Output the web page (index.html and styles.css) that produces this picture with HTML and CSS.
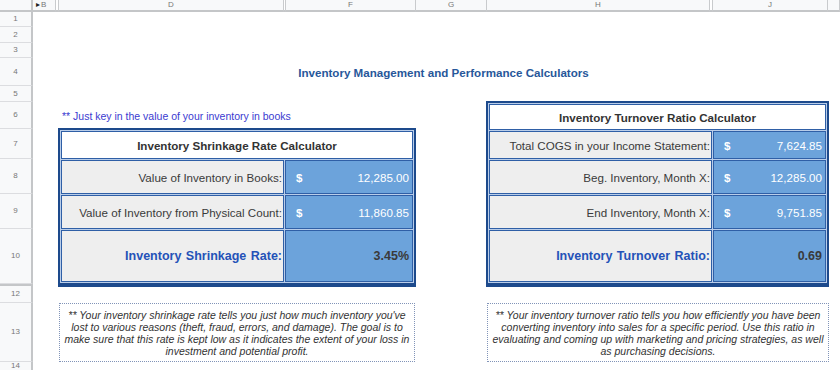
FILE: index.html
```html
<!DOCTYPE html>
<html>
<head>
<meta charset="utf-8">
<title>Inventory Management and Performance Calculators</title>
<link rel="stylesheet" href="styles.css">
</head>
<body>
<div class="sheet">
  <div class="corner"></div>
  <div class="ch ch-b"><span class="tri">&#9656;</span>B</div>
  <div class="ch hid"></div>
  <div class="ch">D</div>
  <div class="ch hid"></div>
  <div class="ch">F</div>
  <div class="ch">G</div>
  <div class="ch">H</div>
  <div class="ch hid"></div>
  <div class="ch">J</div>
  <div class="ch"></div>

  <div class="rh">1</div>
  <div class="rh">2</div>
  <div class="rh">3</div>
  <div class="rh">4</div>
  <div class="rh">5</div>
  <div class="rh">6</div>
  <div class="rh">7</div>
  <div class="rh">8</div>
  <div class="rh">9</div>
  <div class="rh">10</div>
  <div class="rh hid"></div>
  <div class="rh">12</div>
  <div class="rh">13</div>
  <div class="rh">14</div>

  <div class="main-title">Inventory Management and Performance Calculators</div>
  <div class="hint">** Just key in the value of your inventory in books</div>

  <div class="calc calc-left">
    <div class="calc-title">Inventory Shrinkage Rate Calculator</div>
    <div class="lbl">Value of Inventory in Books:</div>
    <div class="val"><span class="cur">$</span><span>12,285.00</span></div>
    <div class="lbl">Value of Inventory from Physical Count:</div>
    <div class="val"><span class="cur">$</span><span>11,860.85</span></div>
    <div class="lbl result">Inventory Shrinkage Rate:</div>
    <div class="val result-val">3.45%</div>
  </div>

  <div class="calc calc-right">
    <div class="calc-title">Inventory Turnover Ratio Calculator</div>
    <div class="lbl">Total COGS in your Income Statement:</div>
    <div class="val"><span class="cur">$</span><span>7,624.85</span></div>
    <div class="lbl">Beg. Inventory, Month X:</div>
    <div class="val"><span class="cur">$</span><span>12,285.00</span></div>
    <div class="lbl">End Inventory, Month X:</div>
    <div class="val"><span class="cur">$</span><span>9,751.85</span></div>
    <div class="lbl result">Inventory Turnover Ratio:</div>
    <div class="val result-val">0.69</div>
  </div>

  <div class="note note-left">** Your inventory shrinkage rate tells you just how much inventory you've lost to various reasons (theft, fraud, errors, and damage). The goal is to make sure that this rate is kept low as it indicates the extent of your loss in investment and potential profit.</div>
  <div class="note note-right">** Your inventory turnover ratio tells you how efficiently you have been converting inventory into sales for a specific period. Use this ratio in evaluating and coming up with marketing and pricing strategies, as well as purchasing decisions.</div>
</div>
</body>
</html>
```

FILE: styles.css
```css
* { box-sizing: border-box; }
html, body { margin: 0; padding: 0; background: #fff; }
body { font-family: "Liberation Sans", Arial, sans-serif; color: #333; }

.sheet {
  width: 840px;
  height: 370px;
  overflow: hidden;
  display: grid;
  grid-template-columns: 33px 23px 3px 225px 2px 130px 71px 223px 3px 115px 1fr;
  grid-template-rows: 12px 15px 16px 15px 28px 16px 27px 30px 35px 35px 55px 2px 17px 59px 1fr;
}

/* headers */
.corner, .ch {
  background: #f8f9fa;
  border-right: 1px solid #c9cbcd;
  border-bottom: 2px solid #c4c6c8;
  font-size: 8px;
  line-height: 1;
  color: #777;
  display: flex;
  align-items: center;
  justify-content: center;
}
.corner { border-right: 2px solid #c4c6c8; }
.ch-b { justify-content: flex-start; padding-left: 3px; }
.tri { font-size: 8px; color: #222; margin-right: 1px; }
.ch.hid { background: #fff; border-right: 1px solid #c9cbcd; }

.rh {
  grid-column: 1;
  background: #f8f9fa;
  border-right: 2px solid #c4c6c8;
  border-bottom: 1px solid #dcdde0;
  font-size: 8px;
  line-height: 1;
  color: #777;
  display: flex;
  align-items: center;
  justify-content: center;
}
.rh.hid { border-bottom: 1px solid #c4c6c8; border-top: 1px solid #c4c6c8; }

/* content */
.main-title {
  grid-row: 5;
  grid-column: 4 / 11;
  align-self: center;
  text-align: center;
  font-weight: bold;
  font-size: 11.6px;
  color: #27579a;
}
.hint {
  grid-row: 7;
  grid-column: 4 / 7;
  align-self: center;
  padding-left: 3px;
  font-size: 10.5px;
  color: #3a3ad0;
}

.calc {
  display: grid;
  grid-template-columns: 223px 1fr;
  gap: 1px;
  padding: 1px;
  background: #b9cde9;
  border: 2px solid #1d4a8c;
  border-bottom-width: 4px;
}
.calc-left {
  grid-row: 8 / 12;
  grid-column: 4 / 7;
  margin: -1px 0 -3px -1px;
  grid-template-rows: 28px 34px 34px 1fr;
}
.calc-right {
  grid-row: 7 / 12;
  grid-column: 8 / 11;
  margin: -1px -1px -3px -1px;
  grid-template-rows: 26px 28px 34px 34px 1fr;
}
.calc-title {
  grid-column: 1 / 3;
  background: #fff;
  border: 1px solid #2f5fa6;
  display: flex;
  align-items: center;
  justify-content: center;
  font-weight: bold;
  font-size: 11.6px;
  color: #333;
}
.lbl {
  background: #eeeeee;
  border: 1px solid #2f5fa6;
  display: flex;
  align-items: center;
  justify-content: flex-end;
  padding-right: 1px;
  font-size: 11.6px;
  color: #3a3a3a;
}
.val {
  background: #6ca3db;
  border: 1px solid #2f5fa6;
  display: flex;
  align-items: center;
  justify-content: space-between;
  padding: 0 3px 0 10px;
  font-size: 11.6px;
  color: #fff;
}
.cur { font-weight: bold; }
.result {
  font-weight: bold;
  font-size: 12.5px;
  color: #2452b8;
  word-spacing: 1px;
}
.result-val {
  justify-content: flex-end;
  font-weight: bold;
  font-size: 12.5px;
  color: #3a3a3a;
}

.note {
  grid-row: 14;
  border: 1px dotted #8194b8;
  display: flex;
  align-items: center;
  justify-content: center;
  text-align: center;
  padding: 0 2px;
  font-style: italic;
  font-size: 10.5px;
  line-height: 12px;
  color: #333;
}
.note-left { grid-column: 4 / 7; margin-right: 1px; }
.note-right { grid-column: 8 / 11; margin-right: -1px; }
```
